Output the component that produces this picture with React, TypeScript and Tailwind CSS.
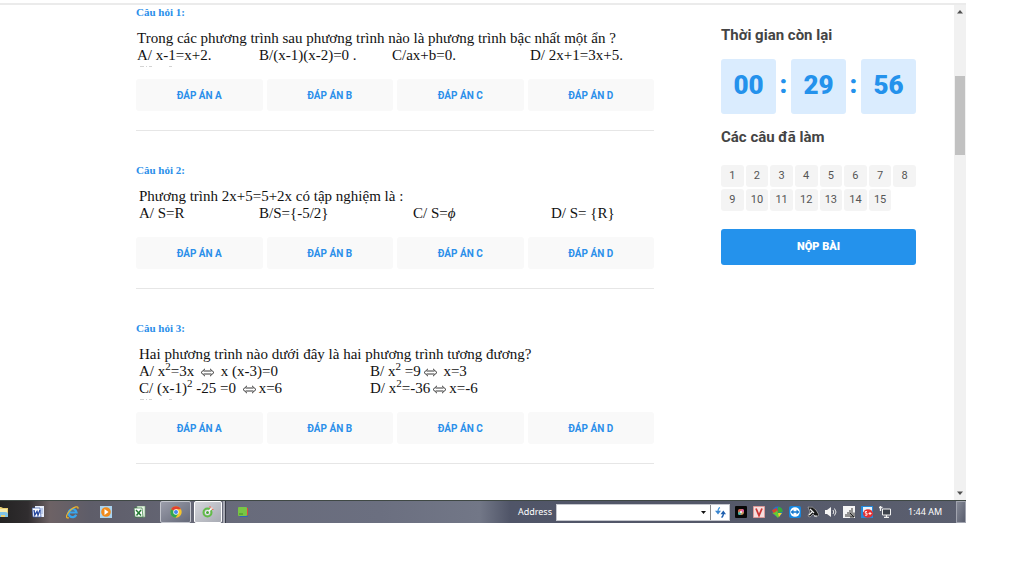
import type { ReactNode } from "react";

type Question = {
  id: number;
  prompt: string;
  inset: string;
  columns: string;
  options: ReactNode[];
  cutLine?: boolean;
};

const Iff = () => (
  <svg viewBox="0 0 15 9" className="mx-[2px] inline-block h-[9px] w-[15px]" fill="none" stroke="#222" strokeWidth="0.9" role="img" aria-label="tương đương">
    <path d="M3.500 3h8M3.500 6h8M5 .8 1 4.500l4 3.700M10 .8l4 3.700-4 3.700" />
  </svg>
);

const Sq = () => <sup className="relative -top-[6px] align-baseline text-[11px] leading-none">2</sup>;

const questions: Question[] = [
  {
    id: 1,
    prompt: "Trong các phương trình sau phương trình nào là phương trình bậc nhất một ẩn ?",
    inset: "pl-px",
    columns: "grid-cols-[122px_133px_138px_1fr]",
    options: ["A/ x-1=x+2.", "B/(x-1)(x-2)=0 .", "C/ax+b=0.", "D/ 2x+1=3x+5."],
    cutLine: true,
  },
  {
    id: 2,
    prompt: "Phương trình 2x+5=5+2x có tập nghiệm là :",
    inset: "pl-[3px]",
    columns: "grid-cols-[120px_154px_138px_1fr]",
    options: ["A/ S=R", "B/S={-5/2}", <>C/ S=<i>ϕ</i></>, "D/ S= {R}"],
  },
  {
    id: 3,
    prompt: "Hai phương trình nào dưới đây là hai phương trình tương đương?",
    inset: "pl-[3px]",
    columns: "grid-cols-[231px_1fr]",
    options: [
      <>A/ x<Sq />=3x <Iff /> x (x-3)=0</>,
      <>B/ x<Sq /> =9<Iff /> x=3</>,
      <>C/ (x-1)<Sq /> -25 =0 <Iff />x=6</>,
      <>D/ x<Sq />=-36<Iff />x=-6</>,
    ],
    cutLine: true,
  },
];

function QuestionBlock({ q }: { q: Question }) {
  return (
    <section className="mb-8 shrink-0 border-b border-[#e6e6e6] pb-[19px]">
      <h2 className="font-['Liberation_Serif',serif] text-[11px] leading-[14px] font-bold text-[#2b8fea]">
        Câu hỏi {q.id}:
      </h2>
      <div className={`mt-[11px] font-['Liberation_Serif',serif] text-[15px] leading-[17px] whitespace-nowrap text-[#111] ${q.inset}`}>
        <p>{q.prompt}</p>
        <div className={`grid ${q.columns}`}>
          {q.options.map((o, i) => (
            <span key={i} className="h-[17px]">{o}</span>
          ))}
        </div>
      </div>
      <div className="h-[15px] pt-[2px]">
        {q.cutLine && (
          <svg viewBox="0 0 40 2" className="ml-1 h-[2px] w-10" stroke="#d4d4d4" strokeWidth="1" aria-hidden="true">
            <path d="M0 .5h4M6 .5h1M9 .5h3M29 .5h3" />
          </svg>
        )}
      </div>
      <div className="grid grid-cols-4 gap-1">
        {["A", "B", "C", "D"].map((l) => (
          <button key={l} type="button" className="h-8 rounded-[3px] bg-[#f9f9f9] text-[10px] font-bold text-[#2b8fea]">
            ĐÁP ÁN {l}
          </button>
        ))}
      </div>
    </section>
  );
}

function Timer() {
  const parts = ["00", "29", "56"];
  return (
    <div role="timer" className="mt-[14px] flex items-center text-[26px] font-black text-[#2492ec]">
      {parts.map((p, i) => (
        <div key={p} className="contents">
          {i > 0 && <span className="w-[15px] pb-1 text-center">:</span>}
          <span className="flex h-[55px] flex-1 items-center justify-center rounded-[3px] bg-[#daecfe] pb-[2px]">{p}</span>
        </div>
      ))}
    </div>
  );
}

function Sidebar() {
  return (
    <aside className="mr-[38px] w-[195px] shrink-0 pt-5">
      <h2 className="text-[15px] leading-5 font-bold text-[#444]">Thời gian còn lại</h2>
      <Timer />
      <h2 className="mt-[13px] text-[15px] leading-5 font-bold text-[#444]">Các câu đã làm</h2>
      <div className="mt-[18px] grid grid-cols-8 gap-[2px]">
        {Array.from({ length: 15 }, (_, i) => (
          <button key={i} type="button" className="h-[22px] rounded-[3px] bg-[#f4f4f4] text-[11px] text-[#555]">
            {i + 1}
          </button>
        ))}
      </div>
      <button type="button" className="mt-[18px] h-9 w-full rounded-[3px] bg-[#2492ec] text-[11px] font-black text-white">
        NỘP BÀI
      </button>
    </aside>
  );
}

function ScrollBar() {
  return (
    <div className="flex w-3 shrink-0 flex-col items-center bg-[#f1f1f1]" aria-hidden="true">
      <svg viewBox="0 0 12 14" className="h-[14px] w-3"><path d="M3 8.500 6 5l3 3.500z" fill="#505050" /></svg>
      <div className="mt-[57px] h-[79px] w-[10px] bg-[#c1c1c1]" />
      <svg viewBox="0 0 12 14" className="mt-auto h-[14px] w-3"><path d="M3 5.500 6 9l3-3.500z" fill="#505050" /></svg>
    </div>
  );
}

const FolderIcon = () => (
  <svg viewBox="0 0 14 14" className="h-[14px] w-[14px]">
    <path d="M0 2h6l2 1h5v9H0z" fill="#e9cf74" />
    <path d="M1 4h11v4H1z" fill="#f7ebac" />
    <path d="M3 12V9q0-2 3-2h4q3 0 3 2v3h-3v-2H6v2z" fill="#7fc3e6" />
  </svg>
);
const WordIcon = () => (
  <svg viewBox="0 0 12 12" className="h-3 w-3">
    <path d="M3 0h9v11H3z" fill="#e8eefb" /><path d="M9 3h2M9 5h2M9 7h2" stroke="#8ea6d8" />
    <path d="M0 2h8l1 9H1z" fill="#fff" stroke="#3556a8" strokeWidth=".7" />
    <path d="m2 4 .8 5L5 5.500 6 9l2-5" fill="none" stroke="#26489f" strokeWidth="1.400" />
  </svg>
);
const IeIcon = () => (
  <svg viewBox="0 0 14 14" className="h-[13px] w-[13px]" fill="none">
    <path d="M11 9.500A4.300 4.300 0 1 1 11.300 7H4" stroke="#38a6ee" strokeWidth="2.400" />
    <path d="M3 12.500C-.5 14-.3 9.500 4 5.200 8.500.8 14-.8 12.700 3" stroke="#f0b429" strokeWidth="1.300" />
  </svg>
);
const PlayerIcon = () => (
  <svg viewBox="0 0 12 12" className="h-3 w-3">
    <path d="M0 0h12v12H0z" fill="#a9d3f0" /><circle cx="6" cy="6" r="4.800" fill="#f08a1c" /><path d="m4.500 3 4 3-4 3z" fill="#fff" />
  </svg>
);
const ExcelIcon = () => (
  <svg viewBox="0 0 12 12" className="h-3 w-3">
    <path d="M3 0h8v11H3z" fill="#e3f1e2" stroke="#7aa97a" strokeWidth=".6" />
    <path d="M0 2h8l1 9H1z" fill="#fff" stroke="#2f7a38" strokeWidth=".7" />
    <path d="m2 4 5 5.500M7 4 2.500 9.500" stroke="#237a32" strokeWidth="1.500" />
  </svg>
);
const ChromeIcon = () => (
  <svg viewBox="0 0 12 12" className="h-3 w-3">
    <circle cx="6" cy="6" r="5.700" fill="#f7c52b" />
    <path d="M6 6 1 3.200A5.700 5.700 0 0 1 11 3.200H6z" fill="#e2402f" />
    <path d="M6 6 1 3.200A5.700 5.700 0 0 0 5.500 11.700L8 8z" fill="#31a650" />
    <circle cx="6" cy="6" r="2.700" fill="#fff" /><circle cx="6" cy="6" r="2" fill="#4486ee" />
  </svg>
);
const CocCocIcon = () => (
  <svg viewBox="0 0 12 12" className="h-3 w-3" fill="none">
    <circle cx="5.500" cy="6.500" r="4" stroke="#62bd48" strokeWidth="2" />
    <circle cx="5.500" cy="6.500" r="2.300" fill="#fff" />
    <circle cx="5.500" cy="6.500" r="1.500" fill="#49a838" />
    <path d="m7 5 3.500-3.500" stroke="#fff" strokeWidth="1.500" /><path d="M7 1h2M10 3.500h1.500M9.500 2h1" stroke="#ee6c55" strokeWidth="1.200" />
  </svg>
);
const GreenAppIcon = () => (
  <svg viewBox="0 0 12 12" className="h-3 w-3">
    <rect x="2.500" y="3" width="8.500" height="8" rx="1" fill="#2c68b5" /><path d="M9 2h2v7.500H9z" fill="#dc4a3a" />
    <rect x="1" y="1" width="9" height="9" rx="1" fill="#78c545" /><path d="M2 8h4" stroke="#438e27" />
  </svg>
);

const trayIcons: { name: string; art: ReactNode }[] = [
  { name: "Color", art: <><rect width="12" height="12" rx="1" fill="#080808" /><circle cx="6" cy="6" r="3" fill="#c9955f" /><circle cx="7.500" cy="4.500" r="1.500" fill="#e45ca8" /><circle cx="4.500" cy="7.500" r="1.500" fill="#48b6ac" /><circle cx="4.500" cy="4.500" r="1.300" fill="#dd5b50" /><circle cx="6" cy="6" r="1" fill="#fff" /></> },
  { name: "Unikey", art: <><path d="M.5.5h11v11H.5z" fill="#f6dedd" stroke="#d99" /><path d="m3 2.500 3 7 3-7" fill="none" stroke="#cc3535" strokeWidth="1.800" /></> },
  { name: "Download manager", art: <><circle cx="6.500" cy="5.500" r="5" fill="#2771c8" /><path d="M7 1q5 0 4.500 5L7 7z" fill="#38a938" /><path d="M1 4 6 2l1 4-4 3z" fill="#d9442f" /><path d="M1 7q4 0 5-3l1 4 3-1-3 5-4-4z" fill="#63cf32" /><path d="M7 7h4l-3 4z" fill="#f2cf32" /></> },
  { name: "Remote", art: <><rect width="12" height="12" rx="2" fill="#1787e0" /><circle cx="6" cy="6" r="4.800" fill="#fff" /><path d="m1.500 6 3-2.500v1.700h3V3.500l3 2.500-3 2.500V6.800h-3v1.700z" fill="#1478cf" /></> },
  { name: "Audio", art: <><path d="M1 1q5-1 8 3l3 5-3 2-3-3-3 3-2-1 2-4z" fill="#171717" stroke="#ccc" strokeWidth=".6" /><path d="m3 3 4 4M2 9l3-3M7 10h3" stroke="#eee" strokeWidth="1.200" /></> },
  { name: "Volume", art: <><path d="M0 4h2l4-3v10L2 8H0z" fill="#f4f4f4" /><path d="M8 4q1.500 2 0 4M9.500 2.500q3 3.500 0 7" fill="none" stroke="#e6e6e6" /></> },
  { name: "Signal", art: <><path d="M0 0h12v12H0z" fill="#f4f4f4" /><path d="M3 11V8M5 11V6M7 11V4M9 11V2" stroke="#444" strokeWidth="1.100" /><path d="m7 7 4 4M11 6.500V11H7" fill="none" stroke="#222" /></> },
  { name: "Messages", art: <><path d="M0 0h12v12H0z" fill="#2588d9" /><path d="M2 1h9v5H2z" fill="#e5f3fd" /><ellipse cx="7" cy="7.500" rx="5" ry="4.300" fill="#e52f2f" /><path d="M6 5.500H4.300v1.700H6v2H4M7.500 7.500h3M9 6v3" fill="none" stroke="#fff" strokeWidth=".9" /></> },
  { name: "Network", art: <><path d="M3.500 3h8v6h-8z" fill="#3c414b" stroke="#f0f0f0" /><path d="M5 11.500h5M7.500 9v2.500M1.500 0v5M0 1.500h3.500" stroke="#f0f0f0" strokeWidth="1.300" /></> },
];

function TaskBar() {
  const launch = "flex h-full w-[34px] shrink-0 items-center justify-center";
  return (
    <footer className="flex h-[23px] shrink-0 items-center overflow-hidden border-t border-[#3f4844] bg-[linear-gradient(90deg,#242323_0px,#302d2f_28px,#6d6265_50px,#5e5d69_90px,#686b7b_240px,#6b6f80_380px,#727787_480px,#505568_510px,#545869_700px,#5b5f6f_966px)] text-[9px] text-white">
      <nav className="flex h-full items-center" aria-label="Quick launch">
        <button type="button" aria-label="Explorer" className="flex w-[21px] items-center"><span className="-ml-[5px]"><FolderIcon /></span></button>
        <button type="button" aria-label="Word" className={launch}><WordIcon /></button>
        <button type="button" aria-label="Internet Explorer" className={launch}><IeIcon /></button>
        <button type="button" aria-label="Media Player" className={launch}><PlayerIcon /></button>
        <button type="button" aria-label="Excel" className={launch}><ExcelIcon /></button>
        <button type="button" aria-label="Chrome" className="ml-[3px] flex h-full w-[31px] items-center justify-center rounded-[2px] border border-[#c3c5cd] bg-linear-to-br from-[#9b9daa] to-[#656979]"><ChromeIcon /></button>
        <button type="button" aria-label="Cốc Cốc" className="ml-[3px] flex h-full w-7 items-center justify-center rounded-[2px] border border-white bg-linear-to-br from-[#d5d6db] to-[#a8abb4]"><CocCocIcon /></button>
        <span className="ml-px h-full w-[3px] border-r border-[#353844] bg-[#a6a8b2]" />
        <button type="button" aria-label="Notes" className={launch}><GreenAppIcon /></button>
      </nav>
      <label htmlFor="address" className="ml-auto pr-1 font-['Noto_Sans',sans-serif]">Address</label>
      <div className="flex h-[17px] border border-[#c5c7cd] bg-white">
        <input id="address" type="text" className="w-[139px] outline-none" />
        <button type="button" aria-label="Mở danh sách" className="flex w-[14px] items-center justify-center">
          <svg viewBox="0 0 5 3" className="h-[3px] w-[5px]"><path d="M0 0h5L2.500 3z" fill="#111" /></svg>
        </button>
        <button type="button" aria-label="Làm mới" className="flex w-[19px] items-center justify-center border-l border-[#888]">
          <svg viewBox="0 0 11 11" className="h-[11px] w-[11px]">
            <path d="M5 .5Q3 1 3 5.500" fill="none" stroke="#4a9ade" strokeWidth="1.300" />
            <path d="M0 3.800h6L3 7.500z" fill="#3a86d0" />
            <path d="M8.500 5.500q0 4-2 5" fill="none" stroke="#1f5fae" strokeWidth="1.300" />
            <path d="M5.500 7.200h5.500L8.300 3.500z" fill="#1f5fae" />
          </svg>
        </button>
      </div>
      <div className="ml-[5px] flex items-center gap-[6px]">
        {trayIcons.map((t) => (
          <svg key={t.name} viewBox="0 0 12 12" className="h-3 w-3" role="img" aria-label={t.name}>{t.art}</svg>
        ))}
      </div>
      <time className="ml-[17px] w-12 font-['Noto_Sans',sans-serif] whitespace-nowrap">1:44 AM</time>
      <button type="button" aria-label="Show desktop" className="h-full w-[10px] border border-[#a1a4af] bg-linear-to-br from-[#858996] to-[#5a5e6e]" />
    </footer>
  );
}

export default function App() {
  return (
    <div className="min-h-screen bg-white pr-[58px] pb-[53px] font-[Roboto,sans-serif]">
      <div className="flex h-[calc(100vh-53px)] flex-col pt-[3px]">
        <div className="flex min-h-0 flex-1 border-t-2 border-[#ebebeb]">
          <div className="flex min-w-0 flex-1 justify-between overflow-hidden pl-[136px]">
            <main className="mr-[67px] flex min-w-0 flex-1 flex-col">
              {questions.map((q) => (
                <QuestionBlock key={q.id} q={q} />
              ))}
            </main>
            <Sidebar />
          </div>
          <ScrollBar />
        </div>
        <TaskBar />
      </div>
    </div>
  );
}
